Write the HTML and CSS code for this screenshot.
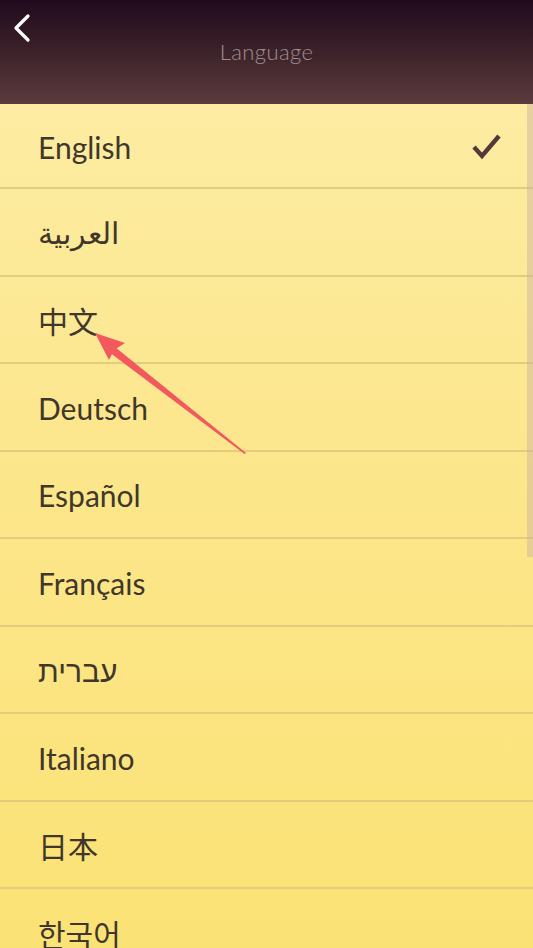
FILE: index.html
```html
<!DOCTYPE html>
<html lang="en">
<head>
    <meta charset="UTF-8">
    <meta name="viewport" content="width=device-width, initial-scale=1.0">
    <title>Language</title>
    <link rel="stylesheet" href="styles.css">
</head>
<body>
    <div class="screen">
        <header class="topbar">
            <button class="back-btn" aria-label="Back">
                <svg width="22" height="32" viewBox="0 0 22 32">
                    <polyline points="16,3 4,15 16,27" fill="none" stroke="#fff" stroke-width="3.2" stroke-linecap="round" stroke-linejoin="round"/>
                </svg>
            </button>
            <h1 class="title">Language</h1>
        </header>

        <ul class="lang-list">
            <li class="lang-item selected">
                <span>English</span>
                <svg class="check" width="32" height="30" viewBox="0 0 32 30">
                    <polyline points="3,16 11,25 28,5" fill="none" stroke="#573838" stroke-width="4.4"/>
                </svg>
            </li>
            <li class="lang-item"><span lang="ar">العربية</span></li>
            <li class="lang-item"><span lang="zh">中文</span></li>
            <li class="lang-item"><span>Deutsch</span></li>
            <li class="lang-item"><span>Español</span></li>
            <li class="lang-item"><span>Français</span></li>
            <li class="lang-item"><span lang="he">עברית</span></li>
            <li class="lang-item"><span>Italiano</span></li>
            <li class="lang-item"><span lang="ja">日本</span></li>
            <li class="lang-item"><span lang="ko">한국어</span></li>
        </ul>

        <div class="scrollbar"></div>

        <!-- pointer arrow over the list -->
        <svg class="pointer" width="533" height="948" viewBox="0 0 533 948">
            <polygon points="246,453 244.6,454 111,353.5 115,347" fill="#f2585c"/>
            <polygon points="95,333 125,343 114,350 109,360" fill="#f2585c"/>
        </svg>
    </div>
</body>
</html>
```

FILE: styles.css
```css
body {
    margin: 0;
    font-family: 'Lato', 'Noto Sans CJK SC', sans-serif;
    background: #fbe474;
}

.screen {
    position: relative;
    width: 533px;
    height: 948px;
    overflow: hidden;
}

.topbar {
    height: 104px;
    background: linear-gradient(180deg, #200b1e 0%, #3c2229 50%, #5c3b3d 100%);
    position: relative;
}

.back-btn {
    position: absolute;
    left: 12px;
    top: 13px;
    padding: 0;
    border: none;
    background: none;
}

.title {
    margin: 0;
    padding-top: 38px;
    text-align: center;
    font-size: 22px;
    font-weight: 300;
    color: #a08d91;
    letter-spacing: 0.4px;
}

.lang-list {
    list-style: none;
    margin: 0;
    padding: 0;
    background: linear-gradient(180deg, #fdeca2 0%, #fce68a 45%, #fbe274 100%);
}

.lang-item {
    display: flex;
    align-items: center;
    justify-content: space-between;
    height: 85.5px;
    padding: 0 30px 0 38px;
    border-bottom: 2px solid #e2cd7e;
    font-size: 30px;
    color: #40372a;
}

.lang-item:first-child {
    height: 83px;
}

.lang-item span {
    margin-top: 2px;
}

.check {
    margin-top: 0;
}

.scrollbar {
    position: absolute;
    right: 0;
    top: 104px;
    width: 6px;
    height: 453px;
    background: rgba(205, 175, 160, 0.45);
}

.pointer {
    position: absolute;
    left: 0;
    top: 0;
    pointer-events: none;
}
```
